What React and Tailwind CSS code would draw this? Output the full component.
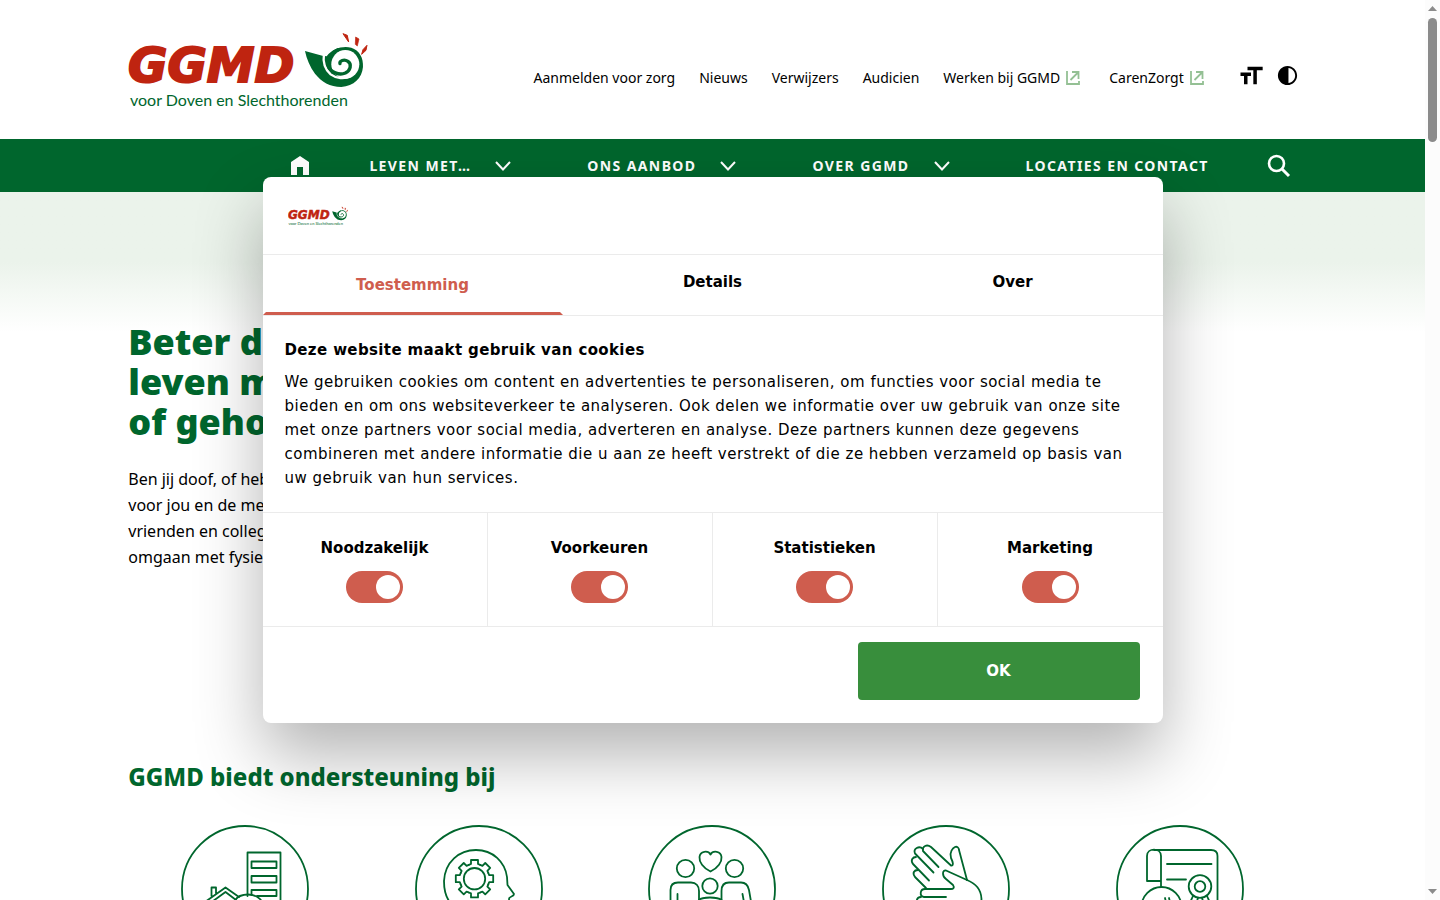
import { MdContrast, MdFormatSize } from 'react-icons/md';

const topLinks = [
  { label: 'Aanmelden voor zorg' },
  { label: 'Nieuws' },
  { label: 'Verwijzers' },
  { label: 'Audicien' },
  { label: 'Werken bij GGMD', external: true },
  { label: 'CarenZorgt', external: true },
];

const consentOptions = ['Noodzakelijk', 'Voorkeuren', 'Statistieken', 'Marketing'];

const Logo = ({ className }) => (
  <svg viewBox="0 -1 240 80" className={className} role="img" aria-label="GGMD">
    <text
      x="0"
      y="51"
      fill="#bf2410"
      stroke="#bf2410"
      strokeWidth="2"
      fontFamily="'DejaVu Sans', sans-serif"
      fontSize="48"
      fontWeight="700"
      fontStyle="italic"
    >
      GGMD
    </text>
    <text x="2" y="75" fill="#00662d" fontFamily="Lato, sans-serif" fontSize="16">
      voor Doven en Slechthorenden
    </text>
    <g transform="translate(-8 -10) scale(0.3333)">
      <path
        d="M555 90 L607 104 L620 106 C638 82 668 74 694 80 C718 88 731 110 729 138 C726 172 702 195 664 198 C630 198 604 182 585 158 C570 138 560 114 555 90 Z"
        fill="#00662d"
      />
      <ellipse cx="676" cy="130" rx="42" ry="43" fill="#fff" />
      <path
        d="M612 98 C608 124 616 146 632 160 C648 172 674 176 692 164"
        fill="none"
        stroke="#fff"
        strokeWidth="7"
      />
      <path
        d="M654 86 C630 98 619 118 625 136 C632 154 658 164 676 156 C692 148 696 130 684 121 C672 113 658 120 660 128"
        fill="none"
        stroke="#00662d"
        strokeWidth="10"
        strokeLinecap="round"
      />
      <path d="M669 38 L682 43 L686 63 Z" fill="#bf2410" stroke="#bf2410" strokeWidth="3" />
      <path d="M707 48 L717 54 L712 75 L706 70 Z" fill="#bf2410" stroke="#bf2410" strokeWidth="2" />
      <path d="M741 73 L738 88 L725 100 L729 86 Z" fill="#bf2410" stroke="#bf2410" strokeWidth="3" />
    </g>
  </svg>
);

const ExternalIcon = () => (
  <svg viewBox="0 0 14 14" className="w-3.5 h-3.5" fill="none" stroke="#94c094" strokeWidth="1.800">
    <path d="M1 0 V13 H13 V10" />
    <path d="M4.500 9 L12 1.500 M6 1 H12.500 V8" />
  </svg>
);

const Chevron = () => (
  <svg viewBox="0 0 16 10" className="w-4 h-2.5" fill="none" stroke="#fff" strokeWidth="2">
    <path d="M1 1 L8 8.500 L15 1" />
  </svg>
);

const HomeIcon = () => (
  <svg viewBox="0 0 18 19" className="w-[18px] h-[19px]" fill="#fff">
    <path d="M9 0 L18 6 V19 H12 V11 H6 V19 H0 V6 Z" />
  </svg>
);

const SearchIcon = () => (
  <svg viewBox="0 0 24 24" className="w-6 h-6" fill="none" stroke="#fff" strokeWidth="2.600">
    <circle cx="9.5" cy="9.5" r="7.500" />
    <path d="M14.500 14.500 L22 22" strokeWidth="3" />
  </svg>
);

const gearTeeth = [0, 45, 90, 135, 180, 225, 270, 315];

const HousingDrawing = () => (
  <>
    <path d="M66.500 71 V27.500 H99.500 V105 H84" />
    <path d="M70.500 36.500 H95.500 V43 H70.500 Z M70.500 51 H95.500 V57.500 H70.500 Z M76 71 H95.500 V65 H70.500 V70" />
    <path d="M52 80 C54 72 60 69.500 67 69.500 C76 69.500 83 75 84 86" />
    <path d="M30.500 71 V62.500 H35 V68 M24 77 L44.500 62.500 L58 72 M28 79 L44.500 67 L55 75" />
    <path d="M28 79 V105 H60 V80" />
  </>
);

const MindDrawing = () => (
  <>
    <path d="M34 76 C30 70 29 63 29 56 C30 37 44 25 61 25 C78 25 90 37 92 52 L92.500 60 L99 69 C99 72 94 71 94 74 L95 86" />
    <circle cx="59.5" cy="53.700" r="10.700" />
    {gearTeeth.map((angle) => (
      <path
        key={angle}
        transform={`rotate(${angle} 59.5 53.7)`}
        d="M53.800 39.900 L56 39 V35 H63 V39 L65.200 39.900"
      />
    ))}
  </>
);

const FamilyDrawing = () => (
  <>
    <path d="M62.500 46.500 C55 43 51 37 51.500 32 C52 26 60 25 62.500 29.500 C65 25 73 26 73.500 32 C74 37 70 43 62.500 46.500 Z" />
    <circle cx="37.5" cy="43.500" r="8.700" />
    <circle cx="86.5" cy="43.500" r="8.700" />
    <circle cx="62" cy="61" r="7.700" />
    <path d="M22.500 90 V65 C22.500 60 25 57.500 30 57.500 H43 C48 57.500 51 61 51 66 V90" />
    <path d="M73.500 90 V66 C73.500 60 76 57.500 81 57.500 H93 C98 57.500 100 60 101 65 L105 88" />
    <path d="M51 75 C53 73 56 72.500 62 72.500 S71 73 73.500 75 M29.500 69 V90 M94.500 69 L98 88" />
  </>
);

const HandsDrawing = () => (
  <>
    <path d="M56.500 42 L41 26 C40 21 45 19 49 22 L69 40.500 C72 41 71 37 69 33 C67 27 71 23 73 22 C75 21 77 23 77 25 L85 55" />
    <path d="M51.500 47.500 L33 28.500 C31 24 37 20 41 24" />
    <path d="M47 55.500 L31 39 C28 35 31 32 34 32" />
    <path d="M44 63 L33 52 C30 48 32 45 36 45" />
    <path d="M85 55 L64 45.500 C60 45 60 51 64 54 L71 60 C73 63 71 64 69 64 H43 C38 64 37 71 42 72 H64" />
    <path d="M85 55 C94 59 99 64 99.500 74 L98 90 M39 72 C34 72 33 79 38 80 H60" />
  </>
);

const DiplomaDrawing = () => (
  <>
    <path d="M45 56 H31 V31 C31 22.500 45 22.500 45 31 V62 M38 25 H95 C99 25 101.500 27 101.500 31 V100 H60" />
    <path d="M51 39 H95.500 M51 54.500 H70" />
    <circle cx="84" cy="61.500" r="11.300" />
    <circle cx="84" cy="61.500" r="5.300" />
    <path d="M77 71 L72 82 M82 73 L79 82 M86 73 L89 82 M91 71 L96 82" />
    <circle cx="45.5" cy="82" r="20" />
    <path d="M49 73 L50 77 M53 73 L54 77" />
  </>
);

const supportItems = [
  { label: 'Wonen', drawing: <HousingDrawing /> },
  { label: 'Psychische hulp', drawing: <MindDrawing /> },
  { label: 'Gezin', drawing: <FamilyDrawing /> },
  { label: 'Gebarentaal', drawing: <HandsDrawing /> },
  { label: 'Cursussen', drawing: <DiplomaDrawing /> },
];

const Header = () => (
  <header>
    <div className="w-[82%] mx-auto h-[139px] flex items-center justify-between">
      <a href="#">
        <Logo className="w-60" />
      </a>
      <div className="flex items-center mt-4 gap-9 -mr-0.5">
        <ul className="flex gap-6 text-sm">
          {topLinks.map((link) => (
            <li key={link.label}>
              <a href="#" className="flex items-center gap-1.5">
                {link.label}
                {link.external && (
                  <span className="pr-[5px]">
                    <ExternalIcon />
                  </span>
                )}
              </a>
            </li>
          ))}
        </ul>
        <div className="flex items-center gap-[11px] pb-1 -ml-2">
          <button type="button" aria-label="Tekstgrootte">
            <MdFormatSize className="w-7 h-7" />
          </button>
          <button type="button" aria-label="Contrast">
            <MdContrast className="w-[23px] h-[23px]" />
          </button>
        </div>
      </div>
    </div>
    <nav className="bg-[#00662d] text-white">
      <div className="w-[82%] mx-auto h-[53px] flex items-center justify-end text-sm font-bold tracking-widest">
        <a href="#" aria-label="Home" className="mr-[60px]">
          <HomeIcon />
        </a>
        <button type="button" className="flex items-center gap-6 mr-[76px]">
          LEVEN MET… <Chevron />
        </button>
        <button type="button" className="flex items-center gap-6 mr-[76px]">
          ONS AANBOD <Chevron />
        </button>
        <button type="button" className="flex items-center gap-6 mr-[76px]">
          OVER GGMD <Chevron />
        </button>
        <a href="#" className="mr-[58px]">
          LOCATIES EN CONTACT
        </a>
        <button type="button" aria-label="Zoeken" className="mr-1.5">
          <SearchIcon />
        </button>
      </div>
    </nav>
  </header>
);

const CookieDialog = () => (
  <div
    role="dialog"
    aria-label="Cookies"
    className="w-[900px] max-w-full bg-white rounded-lg text-[15px] leading-6 font-['DejaVu_Sans',sans-serif] shadow-[0_32px_68px_rgba(0,0,0,0.3)]"
  >
    <div className="h-[78px] px-[25px] flex items-center border-b border-[#ebebeb]">
      <Logo className="w-[60px]" />
    </div>
    <div className="grid grid-cols-3 h-[61px] border-b border-[#ebebeb] font-bold">
      <button
        type="button"
        className="h-[60px] pt-0.5 border-x-3 border-b-3 border-x-transparent border-b-[#cf5d4e] text-[#cf5d4e]"
      >
        Toestemming
      </button>
      <button type="button" className="pb-1.5">
        Details
      </button>
      <button type="button" className="pb-1.5">
        Over
      </button>
    </div>
    <div className="px-[22px] py-[22px]">
      <h2 className="font-bold mb-2 tracking-wide">Deze website maakt gebruik van cookies</h2>
      <p className="tracking-[0.033em]">
        We gebruiken cookies om content en advertenties te personaliseren, om functies voor social
        media te bieden en om ons websiteverkeer te analyseren. Ook delen we informatie over uw
        gebruik van onze site met onze partners voor social media, adverteren en analyse. Deze
        partners kunnen deze gegevens combineren met andere informatie die u aan ze heeft
        verstrekt of die ze hebben verzameld op basis van uw gebruik van hun services.
      </p>
    </div>
    <div className="grid grid-cols-4 border-y border-[#ebebeb]">
      {consentOptions.map((option) => (
        <label
          key={option}
          className="flex flex-col items-center gap-[11px] py-[23px] font-bold border-r border-[#ebebeb] last:border-r-0"
        >
          {option}
          <input
            type="checkbox"
            defaultChecked
            className="appearance-none relative w-[57px] h-8 rounded-full bg-[#cf5d4e] before:absolute before:top-1 before:right-[3px] before:w-6 before:h-6 before:rounded-full before:bg-white"
          />
        </label>
      ))}
    </div>
    <div className="flex justify-end px-[23px] pt-[15px] pb-[23px]">
      <button
        type="button"
        className="w-[282px] h-[58px] rounded-sm bg-[#388e3c] text-white font-bold"
      >
        OK
      </button>
    </div>
  </div>
);

const Scrollbar = () => (
  <div
    className="w-[15px] shrink-0 bg-[#fcfcfc] flex flex-col items-center justify-between py-1.5"
    aria-hidden="true"
  >
    <div className="flex flex-col items-center gap-[7px]">
      <svg viewBox="0 0 9 5" className="w-[9px] h-[5px]" fill="#8b8b8b">
        <path d="M0 5 L4.500 0 L9 5 Z" />
      </svg>
      <div className="w-[9px] h-[124px] rounded-full bg-[#8b8b8b]" />
    </div>
    <svg viewBox="0 0 9 5" className="w-[9px] h-[5px]" fill="#8b8b8b">
      <path d="M0 0 L4.500 5 L9 0 Z" />
    </svg>
  </div>
);

const App = () => {
  return (
    <div className="flex h-screen overflow-hidden bg-white font-['Noto_Sans',sans-serif] text-black">
      <div className="relative flex-1 min-w-0 overflow-hidden">
        <Header />
        <main className="bg-linear-to-b from-[#ebf3eb] from-[70px] to-white to-[140px]">
          <div className="w-[82%] mx-auto pt-[130px]">
            <section className="max-w-[480px] h-[439px]">
              <h1 className="text-4xl leading-10 font-black text-[#00662d]">
                <span className="block">Beter doof zijn,</span>
                <span className="block">leven met doofheid</span>
                <span className="block">of gehoorverlies</span>
              </h1>
              <p className="mt-6 leading-[26px]">
                <span className="block">Ben jij doof, of heb je gehoorverlies? Wij zijn er</span>
                <span className="block">voor jou en de mensen om je heen, zoals familie,</span>
                <span className="block">vrienden en collega&apos;s. Wij helpen je ook bij het</span>
                <span className="block">omgaan met fysieke klachten.</span>
              </p>
            </section>
            <h2 className="text-2xl leading-8 font-extrabold text-[#00662d]">
              GGMD biedt ondersteuning bij
            </h2>
            <ul className="grid grid-cols-5 mt-8">
              {supportItems.map((item) => (
                <li key={item.label} className="flex justify-center">
                  <a href="#" aria-label={item.label}>
                    <svg
                      viewBox="0 0 128 128"
                      className="w-32 h-32"
                      fill="none"
                      stroke="#00662d"
                      strokeWidth="1.800"
                      strokeLinecap="round"
                      strokeLinejoin="round"
                    >
                      <circle cx="64" cy="64" r="63" />
                      {item.drawing}
                    </svg>
                  </a>
                </li>
              ))}
            </ul>
          </div>
        </main>
        <div className="absolute inset-0 flex items-center justify-center">
          <CookieDialog />
        </div>
      </div>
      <Scrollbar />
    </div>
  );
};

export default App;
